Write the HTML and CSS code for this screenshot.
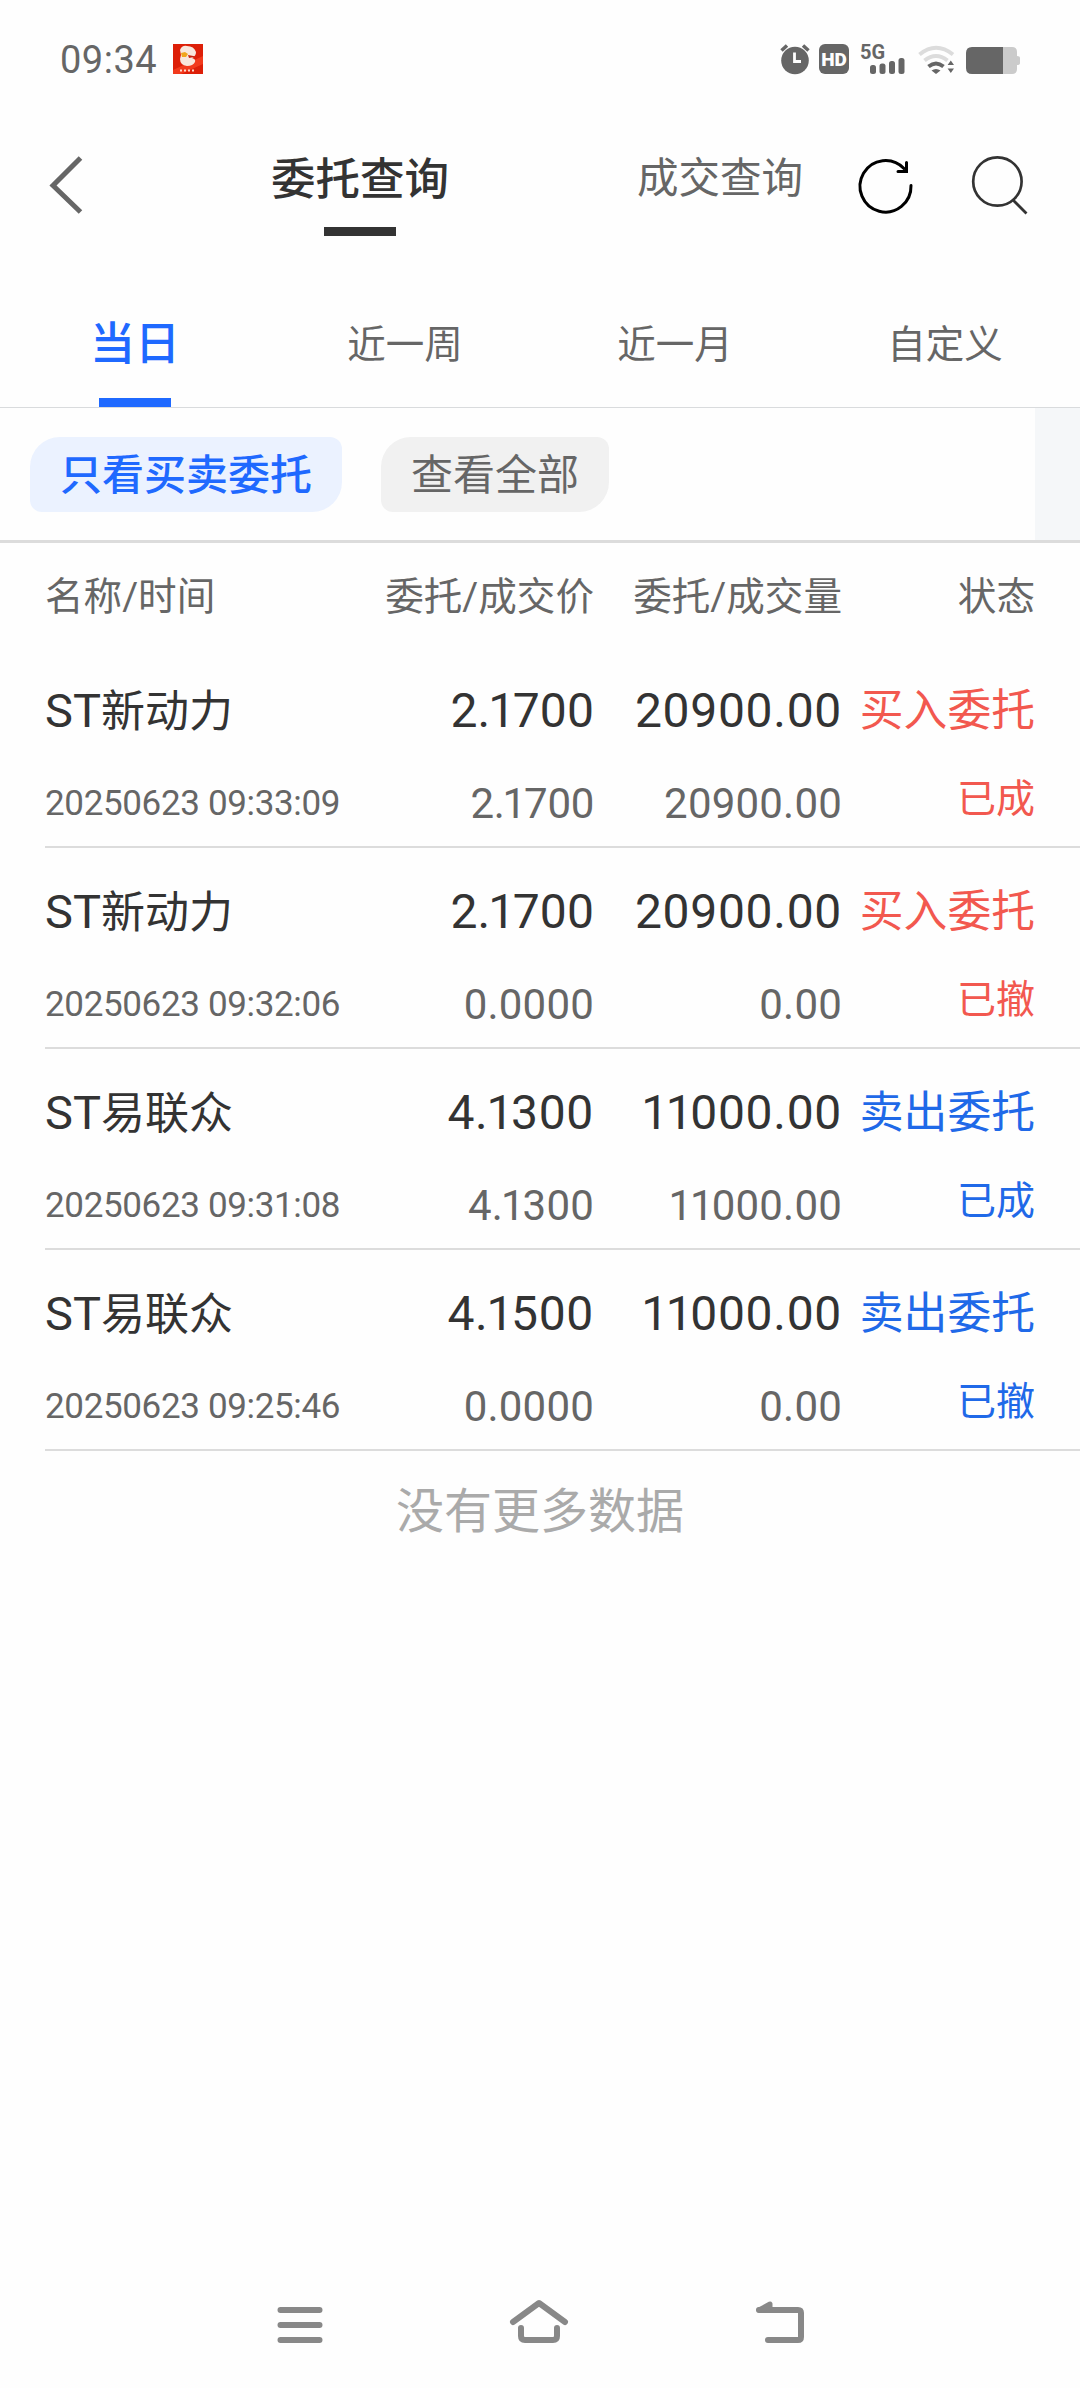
FILE: index.html
```html
<!DOCTYPE html>
<html lang="zh-CN">
<head>
<meta charset="utf-8">
<title>委托查询</title>
<link rel="stylesheet" href="styles.css">
</head>
<body>
<div class="screen">
  <div class="status-bar">
    <span class="clock">09:34</span>
    <svg class="app-badge" width="30" height="30" viewBox="0 0 30 30">
      <rect width="30" height="30" fill="#dd1f08"/>
      <path d="M0 30V26L30 12V20L8 30Z" fill="#f23a1c"/>
      <path d="M7 6Q9 1 14 2Q21 2 23 8Q23 12 19 14Q23 15 22 18Q20 22 14 22Q7 21 7 15L8 11Z" fill="#f8e6dc"/>
      <path d="M8 9L12 8L15 10L13 13L9 13Z" fill="#f0a51c"/>
      <path d="M15 11L23 12.500L16 14Z" fill="#c8200c"/>
      <path d="M7 26.500H23" stroke="#ffd9cc" stroke-width="2" stroke-dasharray="2 2"/>
    </svg>
    <svg class="system-icons" width="242" height="32" viewBox="0 0 242 32">
      <g fill="#666">
        <circle cx="15" cy="17.500" r="13.800"/>
        <path d="M1.500 7.500L7 2.500M28.500 7.500L23 2.500" stroke="#666" stroke-width="3.500"/>
        <path d="M14.500 9.500V18.500H21" fill="none" stroke="#fefefe" stroke-width="2.800"/>
        <rect x="39" y="1" width="30" height="30" rx="6"/>
        <rect x="90" y="22" width="6" height="9" rx="2.500"/>
        <rect x="99.500" y="20.500" width="6" height="10.500" rx="2.500"/>
        <rect x="109" y="18" width="6" height="13" rx="2.500"/>
        <rect x="118.500" y="15" width="6" height="16" rx="2.500"/>
        <path d="M156 31L151.500 27.500Q156 24.500 160.500 27.500Z"/>
        <path d="M170.800 17.500L174 22H167.600ZM170.800 30L167.600 25.500H174Z"/>
      </g>
      <g fill="none" stroke-width="4">
        <path d="M139.500 11.500Q156 -2 173 11.500" stroke="#dcdcdc"/>
        <path d="M144.500 17.500Q156 8.500 167.500 17.500" stroke="#dcdcdc"/>
        <path d="M148.500 23.500Q156 17.500 163.500 23.500" stroke="#666"/>
      </g>
      <path d="M223 4H232Q237 4 237 9V13Q240 13 240 15V20Q240 22 237 22V26Q237 31 232 31H223Z" fill="#cbcbcb"/>
      <path d="M223 4H192Q186 4 186 10V25Q186 31 192 31H223Z" fill="#666"/>
      <text class="hd-text" x="54" y="22.700" text-anchor="middle">HD</text>
      <text class="net-text" x="80" y="16">5G</text>
    </svg>
  </div>

  <header class="title-bar">
    <svg class="back" width="36" height="60" viewBox="0 0 36 60"><path d="M32.500 3L5 30.500L32.500 57" fill="none" stroke="#666" stroke-width="5"/></svg>
    <nav class="pages">
      <a class="page page-active">委托查询</a>
      <a class="page">成交查询</a>
    </nav>
    <svg class="refresh" width="58" height="58" viewBox="0 0 58 58"><path d="M55 28.500A25.500 25.800 0 1 1 48 11.500M50.500 5.500V14.500H42" fill="none" stroke="#000" stroke-width="3" stroke-linecap="round"/></svg>
    <svg class="search" width="60" height="60" viewBox="0 0 60 60"><g fill="none" stroke="#333" stroke-width="2.700"><circle cx="27.400" cy="26.500" r="24.200"/><path d="M43 45L56.500 58.500"/></g></svg>
  </header>

  <nav class="range-tabs">
    <a class="range range-active">当日</a>
    <a class="range">近一周</a>
    <a class="range">近一月</a>
    <a class="range">自定义</a>
  </nav>

  <div class="filters">
    <button class="chip chip-active">只看买卖委托</button>
    <button class="chip">查看全部</button>
    <span class="filter-edge"></span>
  </div>

  <div class="columns">
    <span>名称/时间</span><span>委托/成交价</span><span>委托/成交量</span><span>状态</span>
  </div>

  <main class="orders">
    <div class="order buy">
      <span class="name"><span class="st">ST</span>新动力</span><span class="num price tight">2.<i>1</i>700</span><span class="num">20900.00</span><span class="side">买入委托</span>
      <span class="time">20250623 09:33:09</span><span class="sub price tight">2.<i>1</i>700</span><span class="sub">20900.00</span><span class="state">已成</span>
    </div>
    <div class="order buy">
      <span class="name"><span class="st">ST</span>新动力</span><span class="num price tight">2.<i>1</i>700</span><span class="num">20900.00</span><span class="side">买入委托</span>
      <span class="time">20250623 09:32:06</span><span class="sub price">0.0000</span><span class="sub">0.00</span><span class="state">已撤</span>
    </div>
    <div class="order sell">
      <span class="name"><span class="st">ST</span>易联众</span><span class="num price">4.<i>1</i>300</span><span class="num"><i>11</i>000.00</span><span class="side">卖出委托</span>
      <span class="time">20250623 09:31:08</span><span class="sub price">4.<i>1</i>300</span><span class="sub"><i>11</i>000.00</span><span class="state">已成</span>
    </div>
    <div class="order sell">
      <span class="name"><span class="st">ST</span>易联众</span><span class="num price">4.<i>1</i>500</span><span class="num"><i>11</i>000.00</span><span class="side">卖出委托</span>
      <span class="time">20250623 09:25:46</span><span class="sub price">0.0000</span><span class="sub">0.00</span><span class="state">已撤</span>
    </div>
  </main>
  <p class="end">没有更多数据</p>

  <footer class="system-nav">
    <svg width="46" height="48" viewBox="0 0 46 48"><path d="M3.500 11H42.500M3.500 26H42.500M3.500 41H42.500" stroke="#888" stroke-width="6" stroke-linecap="round"/></svg>
    <svg width="60" height="48" viewBox="0 0 60 48"><g fill="none" stroke="#888" stroke-width="6" stroke-linecap="round" stroke-linejoin="round"><path d="M4 23L30 4L56 23"/><path d="M12 29V37Q12 41 16 41H44Q48 41 48 37V29"/></g></svg>
    <svg width="50" height="48" viewBox="0 0 50 48"><g fill="none" stroke="#888" stroke-width="6" stroke-linecap="round" stroke-linejoin="round"><path d="M4 11H43Q46 11 46 14V38Q46 41 43 41H13"/><path d="M4 11L15 5V8L10 10" fill="#888" stroke-width="5"/></g></svg>
  </footer>
</div>
</body>
</html>
```
FILE: styles.css
```css
* { box-sizing: border-box; }
body {
  margin: 0;
  background: #fefefe;
  color: #666;
  font-family: Roboto, "Noto Sans CJK SC", sans-serif;
}
.screen {
  width: 1080px;
  height: 2388px;
  display: flex;
  flex-direction: column;
}
svg { display: block; flex: none; overflow: visible; }
i { font-style: normal; }

.status-bar {
  height: 118px;
  padding: 0 58px 0 60px;
  display: flex;
  align-items: center;
}
.clock { font-size: 38px; line-height: 44px; letter-spacing: .5px; width: 113px; padding-top: 1px; }
.system-icons { margin-left: auto; }
.hd-text { font: 900 19px Roboto, sans-serif; fill: #fefefe; }
.net-text { font: 700 20px Roboto, sans-serif; fill: #666; }

.title-bar {
  height: 167px;
  display: flex;
  align-items: flex-start;
  padding-top: 37px;
}
.back { margin: 0 0 0 48px; }
.pages { display: flex; width: 720px; margin-left: 96px; }
.page {
  width: 360px;
  height: 81px;
  font-size: 41.500px;
  line-height: 48px;
  text-align: center;
}
.page-active { font-size: 44.500px; line-height: 50px; font-weight: 500; color: #333; }
.page-active::after {
  content: "";
  display: block;
  width: 72px;
  height: 9px;
  margin: 22px auto 0;
  background: #333;
}
.refresh { margin: 2px 0 0 -44px; }
.search { margin-left: 56px; }

.range-tabs {
  height: 123px;
  display: flex;
  border-bottom: 1px solid #d9dbdd;
}
.range {
  flex: 1;
  padding-top: 31px;
  font-size: 38.500px;
  line-height: 58px;
  text-align: center;
}
.range-active { font-size: 45px; font-weight: 500; color: #1f69ff; }
.range-active::after {
  content: "";
  display: block;
  width: 72px;
  height: 9px;
  margin: 24px auto 0;
  background: #1f69ff;
}

.filters {
  height: 135px;
  display: flex;
  align-items: center;
  gap: 39px;
  padding-left: 30px;
  border-bottom: 3px solid #dcdcdc;
}
.chip {
  height: 75px;
  border: 0;
  padding: 4px 30px 0;
  border-radius: 30px 12px;
  background: #f1f1f1;
  color: #666;
  font-family: inherit;
  font-size: 42px;
  line-height: 60px;
}
.chip-active { background: #ebf2ff; color: #1f69ff; font-weight: 500; }
.filter-edge { align-self: stretch; width: 45px; margin-left: auto; background: #f5f7f9; }

.columns, .order {
  display: grid;
  grid-template-columns: 270px 279px 248px 193px;
}
.columns {
  height: 104px;
  padding: 26px 45px 0;
  font-size: 38.600px;
  line-height: 56px;
}
.columns span + span, .order span + span { text-align: right; }

.order {
  height: 201px;
  margin-left: 45px;
  border-bottom: 2px solid #dcdcdc;
  grid-template-rows: 126px 73px;
  white-space: nowrap;
}
.name, .num { color: #333; font-size: 48px; line-height: 128px; }
.name { font-size: 44px; }
.st { font-size: 47px; }
.num { letter-spacing: .7px; }
.num i { letter-spacing: -2.500px; margin-left: -2px; }
.num.tight { letter-spacing: .1px; }
.sub { font-size: 42px; line-height: 62px; letter-spacing: .2px; }
.sub i { letter-spacing: -2px; margin-left: -2px; }
.sub.tight { letter-spacing: -.3px; }
.order .time { font-size: 35px; line-height: 61px; letter-spacing: -.35px; text-align: left; }
.side { font-size: 43.800px; line-height: 129px; }
.state { font-size: 39px; line-height: 53px; }
.buy .side, .buy .state { color: #f2584f; }
.sell .side, .sell .state { color: #1f69e8; }

.end {
  margin: 26px 0 0;
  font-size: 48px;
  line-height: 70px;
  text-align: center;
  color: #aaa;
}

.system-nav {
  margin-top: auto;
  height: 89px;
  padding: 0 275px 0 277px;
  display: flex;
  justify-content: space-between;
}
```
